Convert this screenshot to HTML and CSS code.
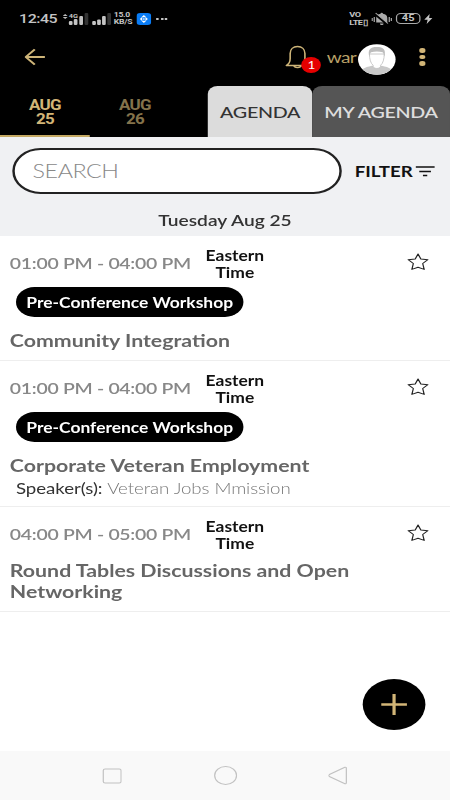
FILE: index.html
```html
<!DOCTYPE html>
<html lang="en">
<head>
    <meta charset="UTF-8">
    <meta name="viewport" content="width=device-width, initial-scale=1.0">
    <title>Agenda</title>
    <link rel="stylesheet" href="styles.css">
</head>
<body>
    <div class="phone">
        <div class="status-bar">
            <span class="clock">12:45</span>
            <svg class="signal" width="42" height="14" viewBox="0 0 42 14">
                <path d="M0 4l2-2 2 2zM0 5l2 2 2-2z" fill="#bbb"/>
                <text x="5" y="6" class="net">4G</text>
                <g fill="#c4c4c4">
                    <rect x="5" y="9" width="3" height="4" rx="1"/>
                    <rect x="9" y="7" width="3" height="6" rx="1"/>
                    <rect x="13.500" y="4" width="3" height="9" rx="1"/>
                    <rect x="24" y="9" width="3" height="4" rx="1"/>
                    <rect x="28" y="7.500" width="3" height="5.500" rx="1"/>
                    <rect x="32" y="4" width="3" height="9" rx="1"/>
                </g>
                <rect x="17.800" y="1" width="3" height="12" rx="1" fill="#333"/>
                <rect x="36.300" y="1" width="3" height="12" rx="1" fill="#333"/>
            </svg>
            <span class="speed">15.0<br>KB/S</span>
            <svg class="app-dot" width="12" height="12" viewBox="0 0 12 12">
                <rect width="12" height="12" rx="3" fill="#0a7cf5"/>
                <path d="M6 2l2 2.300H4zM6 10L4 7.700h4zM2.700 6L4.700 4v4zM9.300 6l-2-2v4z" fill="#fff"/>
                <circle cx="6" cy="6" r=".8" fill="#fff"/>
            </svg>
            <span class="dots">
                <i></i><i></i><i></i>
            </span>
            <span class="volte">VO<br>LTE▯</span>
            <svg class="mute" width="17" height="14" viewBox="0 0 17 14">
                <path d="M4 10.500V6c0-2.500 1.500-4 3.500-4.300a1 1 0 0 1 2 0C11.500 2 13 3.500 13 6v4.500zM7 11.500h3c0 2-3 2-3 0z" fill="#aaa"/>
                <path d="M.7 6v3M2.400 5v5M14.600 5v5M16.300 6v3" stroke="#aaa" stroke-width="1"/>
                <path d="M2.500 1.500l11 11.500" stroke="#000" stroke-width="2"/>
                <path d="M3.500 1l10 10.500" stroke="#aaa" stroke-width="1"/>
            </svg>
            <span class="battery">45</span>
            <svg class="bolt" width="7" height="10" viewBox="0 0 7 10">
                <path d="M4.500 0L0 5.700h2.800L2 10l4.700-5.900H4z" fill="#c4c4c4"/>
            </svg>
        </div>

        <div class="app-bar">
            <svg class="back" width="17" height="18" viewBox="0 0 17 18">
                <path d="M16.500 9H1.200M8.300 1.300L1 9l7.300 7.700" fill="none" stroke="#cdb478" stroke-width="1.800"/>
            </svg>
            <div class="bell">
                <svg width="20" height="24" viewBox="0 0 20 24">
                    <path d="M.8 20.500c2-1.300 3.200-3 3.200-7V8.500c0-4.300 2.500-7 6-7s6 2.700 6 7v5c0 4 1.200 5.700 3.200 7zM7 20.700c.4 2.500 5.600 2.500 6 0" fill="none" stroke="#cdb478" stroke-width="1.300" stroke-linejoin="round"/>
                </svg>
                <span class="badge">1</span>
            </div>
            <span class="user">war</span>
            <svg class="avatar" width="31" height="31" viewBox="0 0 31 31">
                <clipPath id="round"><circle cx="15.500" cy="15.500" r="15.200"/></clipPath>
                <circle cx="15.500" cy="15.500" r="15.300" fill="#fff"/>
                <g clip-path="url(#round)">
                    <path d="M2 31c0-6 3-7.500 9.500-9.300h8C26 23.500 29 25 29 31z" fill="#c9c9c9"/>
                    <path d="M9.500 10c0 5 1 9.500 3 11.300v1.500c1 2.200 5 2.200 6 0v-1.500c2-1.800 3-6.300 3-11.300z" fill="#fff" stroke="#c4c4c4" stroke-width=".8"/>
                    <path d="M9.300 12.500C8 5.500 10 3 15.500 3s7.500 2.500 6.200 9.500c-.7-2.500-.9-4-1.500-4.300-3-1-6.400-1-9.400 0-.6.300-.8 1.800-1.500 4.300z" fill="#bdbdbd"/>
                </g>
            </svg>
            <span class="more"><i></i><i></i><i></i></span>
        </div>

        <div class="tabs">
            <div class="day active">AUG<br>25</div>
            <div class="day">AUG<br>26</div>
            <div class="tab agenda">AGENDA</div>
            <div class="tab my-agenda">MY AGENDA</div>
        </div>

        <div class="search-area">
            <div class="search-row">
                <div class="search">SEARCH</div>
                <span class="filter">FILTER</span>
                <svg width="16" height="11" viewBox="0 0 16 11">
                    <path d="M0 1h15.500M3 5.500h9.500M6 9.500h3.500" stroke="#111" stroke-width="1.400"/>
                </svg>
            </div>
            <div class="date">Tuesday Aug 25</div>
        </div>

        <div class="sessions">
            <div class="session workshop">
                <div class="time-row">
                    <span class="time">01:00 PM - 04:00 PM</span>
                    <span class="zone">Eastern<br>Time</span>
                    <svg class="star" width="18" height="18" viewBox="0 0 18 18">
                        <path d="M9 1l2.300 5 5.700.7-4.200 3.800 1.200 5.900L9 14.300l-5 2.100 1.200-5.900L1 6.700 6.700 6z" fill="none" stroke="#222" stroke-linejoin="round"/>
                    </svg>
                </div>
                <span class="tag">Pre-Conference Workshop</span>
                <div class="title">Community Integration</div>
            </div>
            <div class="session speakers">
                <div class="time-row">
                    <span class="time">01:00 PM - 04:00 PM</span>
                    <span class="zone">Eastern<br>Time</span>
                    <svg class="star" width="18" height="18" viewBox="0 0 18 18">
                        <path d="M9 1l2.300 5 5.700.7-4.200 3.800 1.200 5.900L9 14.300l-5 2.100 1.200-5.900L1 6.700 6.700 6z" fill="none" stroke="#222" stroke-linejoin="round"/>
                    </svg>
                </div>
                <span class="tag">Pre-Conference Workshop</span>
                <div class="title">Corporate Veteran Employment</div>
                <div class="speaker">Speaker(s): <span>Veteran Jobs Mmission</span></div>
            </div>
            <div class="session">
                <div class="time-row">
                    <span class="time">04:00 PM - 05:00 PM</span>
                    <span class="zone">Eastern<br>Time</span>
                    <svg class="star" width="18" height="18" viewBox="0 0 18 18">
                        <path d="M9 1l2.300 5 5.700.7-4.200 3.800 1.200 5.900L9 14.300l-5 2.100 1.200-5.900L1 6.700 6.700 6z" fill="none" stroke="#222" stroke-linejoin="round"/>
                    </svg>
                </div>
                <div class="title">Round Tables Discussions and Open Networking</div>
            </div>
        </div>

        <div class="add">
            <svg width="21" height="21" viewBox="0 0 21 21">
                <path d="M0 10.500h21M10.500 0v21" stroke="#d2b577" stroke-width="2.600"/>
            </svg>
        </div>

        <div class="nav-bar">
            <svg width="16" height="16" viewBox="0 0 16 16">
                <rect x="1" y=".9" width="14.500" height="14" rx="1.500"/>
            </svg>
            <svg width="19" height="19" viewBox="0 0 19 19">
                <circle cx="9.500" cy="9.500" r="8.900"/>
            </svg>
            <svg width="16" height="19" viewBox="0 0 16 19">
                <path d="M13.500 1.200L.9 8.500q-1 1 0 2L13.500 17.800q1.200.3 1.200-1.300v-14Q14.700.9 13.500 1.200z"/>
            </svg>
        </div>
    </div>
</body>
</html>
```

FILE: styles.css
```css
* {
    margin: 0;
    padding: 0;
    box-sizing: border-box;
}

body {
    background-color: #fff;
    font-family: Lato, sans-serif;
    overflow: hidden;
}

/* 366px wide layout, widened to fill the 450px screen */
.phone {
    display: flex;
    flex-direction: column;
    width: 366px;
    height: 800px;
    position: relative;
    transform: scaleX(1.2295);
    transform-origin: 0 0;
}

svg {
    display: block;
    flex-shrink: 0;
}

.status-bar {
    display: flex;
    align-items: center;
    height: 37px;
    padding-left: 15.5px;
    background-color: #000;
    color: #c4c4c4;
    font-family: Roboto, sans-serif;
}

.clock {
    width: 35px;
    font-size: 13px;
    font-weight: 500;
    letter-spacing: -0.4px;
}

.net {
    font-size: 6px;
    font-weight: 700;
    fill: #c4c4c4;
}

.speed, .volte {
    font-size: 7px;
    line-height: 7px;
    font-weight: 700;
}

.speed {
    width: 13px;
    letter-spacing: -0.2px;
}

.app-dot {
    margin-left: 5.5px;
}

.dots {
    display: flex;
    gap: 1.5px;
    margin-left: 4px;
}

.dots i {
    width: 2px;
    height: 2px;
    background-color: #c4c4c4;
}

.volte {
    margin-left: auto;
    width: 15px;
    font-size: 7.5px;
    letter-spacing: -0.4px;
    line-height: 7.5px;
}

.mute {
    margin-left: 3px;
}

.battery {
    width: 20px;
    height: 11px;
    margin-left: 3px;
    border: 1px solid #aaa;
    border-radius: 4px;
    font-size: 9px;
    line-height: 9px;
    font-weight: 700;
    text-align: center;
}

.bolt {
    margin: 0 14px 0 3px;
}

.app-bar {
    display: flex;
    align-items: center;
    height: 43px;
    padding: 0 0 3px 20px;
    background-color: #000;
}

.bell {
    position: relative;
    margin-left: auto;
}

.badge {
    position: absolute;
    left: 13px;
    top: 12px;
    width: 16px;
    height: 16px;
    border-radius: 50%;
    background-color: #e60000;
    color: #fff;
    font-size: 11px;
    line-height: 16px;
    text-align: center;
}

.user {
    margin-left: 13.5px;
    width: 25.5px;
    color: #b8a068;
    font-size: 15.5px;
    letter-spacing: -0.5px;
}

.avatar {
    margin-top: 5px;
}

.more {
    display: flex;
    flex-direction: column;
    gap: 2px;
    margin: 0 20.3px 0 19px;
}

.more i {
    width: 4.5px;
    height: 4.5px;
    border-radius: 50%;
    background-color: #d2b577;
}

.tabs {
    display: flex;
    align-items: flex-end;
    height: 57px;
    background-color: #000;
}

.day {
    width: 73.2px;
    height: 57px;
    padding-top: 18px;
    color: #84734b;
    font-family: Roboto, sans-serif;
    font-size: 13.8px;
    line-height: 14px;
    font-weight: 700;
    letter-spacing: -0.6px;
    text-align: center;
}

.day.active {
    border-bottom: 2px solid #c4a963;
    color: #d2b577;
}

.tab {
    height: 51px;
    border-radius: 8px 8px 0 0;
    font-size: 16px;
    letter-spacing: -0.25px;
    line-height: 52px;
    text-align: center;
}

.agenda {
    width: 84.5px;
    margin-left: 23px;
    background-color: #dcdcdc;
    color: #333;
    font-weight: 500;
}

.my-agenda {
    width: 112.3px;
    background-color: #555;
    color: #ddd;
    font-weight: 600;
}

.search-area {
    height: 99px;
    padding-top: 11px;
    background-color: #f0f1f3;
}

.search-row {
    display: flex;
    align-items: center;
    padding-left: 10px;
}

.search {
    width: 268px;
    height: 46px;
    padding-left: 14.5px;
    border: 2px solid #222;
    border-radius: 23px;
    background-color: #fff;
    color: #888;
    font-size: 19px;
    letter-spacing: -0.4px;
    line-height: 41px;
    font-weight: 300;
}

.filter {
    width: 49px;
    margin-left: 10.5px;
    color: #111;
    font-size: 15.2px;
    font-weight: 700;
}

.date {
    margin-top: 16px;
    color: #333;
    font-size: 15.6px;
    line-height: 20px;
    font-weight: 600;
    text-align: center;
}

.session {
    height: 105px;
    padding: 10px 8px 0;
    border-bottom: 1px solid #eee;
}

.session.workshop {
    height: 125px;
}

.session.speakers {
    height: 146px;
}

.time-row {
    display: flex;
    align-items: center;
    height: 35px;
}

.time {
    width: 149px;
    margin-bottom: 2px;
    color: #888;
    font-size: 15.8px;
    font-weight: 600;
    letter-spacing: -0.24px;
    white-space: nowrap;
}

.zone {
    width: 68px;
    color: #111;
    font-size: 14.2px;
    line-height: 17px;
    font-weight: 700;
    text-align: center;
}

.star {
    margin-left: auto;
    margin-right: 9px;
    margin-bottom: 3px;
}

.tag {
    display: block;
    width: 185px;
    height: 30px;
    margin: 6px 0 0 5px;
    border-radius: 15px;
    background-color: #000;
    color: #fff;
    font-size: 14.2px;
    line-height: 31px;
    font-weight: 700;
    text-align: center;
}

.title {
    margin-top: 8px;
    color: #666;
    font-size: 17.35px;
    line-height: 21px;
    font-weight: 700;
}

.tag + .title {
    margin-top: 13px;
}

.speaker {
    margin-left: 5px;
    color: #333;
    font-size: 15.2px;
    line-height: 24px;
    letter-spacing: -0.05px;
    font-weight: 400;
}

.speaker span {
    color: #777;
    font-weight: 300;
}

.add {
    display: flex;
    align-items: center;
    justify-content: center;
    position: absolute;
    right: 20.5px;
    bottom: 70px;
    width: 51px;
    height: 51px;
    border-radius: 50%;
    background-color: #000;
}

.nav-bar {
    display: flex;
    align-items: center;
    justify-content: space-between;
    height: 49px;
    margin-top: auto;
    padding: 0 83px;
    background-color: #f9f9f9;
}

.nav-bar svg {
    fill: none;
    stroke: #c2c2c2;
}
```
